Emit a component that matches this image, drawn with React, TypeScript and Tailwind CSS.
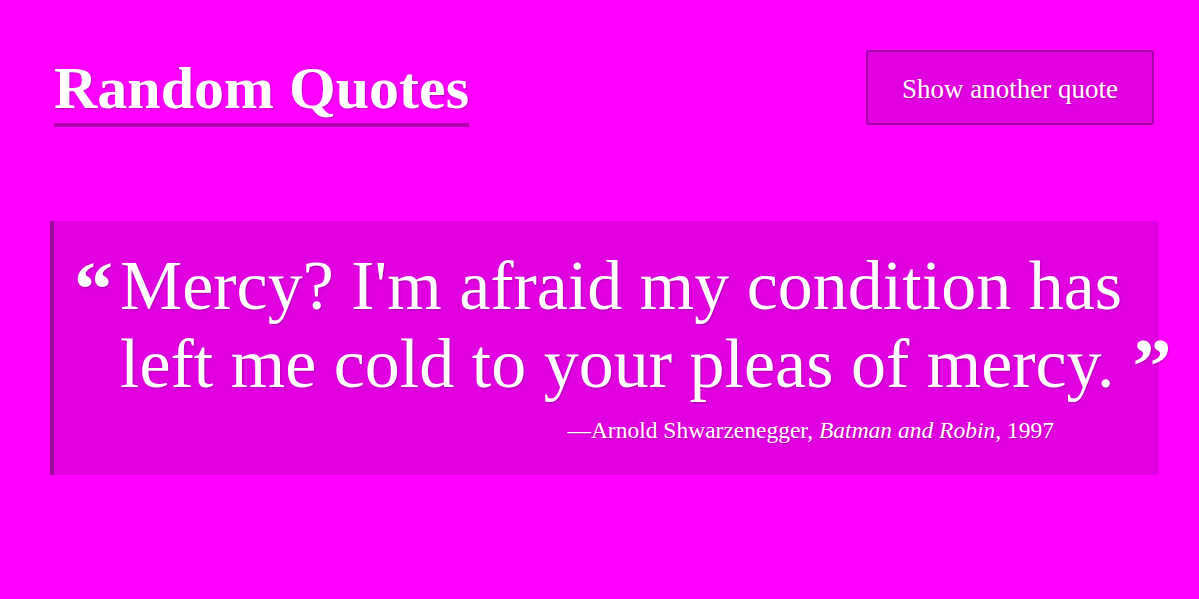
const serif = { fontFamily: '"Liberation Serif", "DejaVu Serif", serif' };

const App = () => {
  return (
    <div className="min-h-[599px] w-full bg-[#ff00ff] text-white" style={serif}>
      <header className="flex items-start justify-between pl-[54px] pr-[45px] pt-[50px]">
        <h1 className="mt-[8px] border-b-4 border-[#b000b0] pb-[5px] text-[60px] font-bold leading-[60px] [text-shadow:1px_1px_2px_rgba(90,0,90,0.35)]">
          Random Quotes
        </h1>
        <button className="h-[75px] w-[288px] rounded-[3px] border-2 border-[#a600a6] bg-[#e000e0] pt-[3px] text-[27px] text-white [text-shadow:1px_1px_1px_rgba(90,0,90,0.3)]">
          Show another quote
        </button>
      </header>

      <main className="pl-[50px] pt-[94px]">
        <blockquote className="w-[1109px] rounded-r-[4px] border-l-4 border-[#9c0a9c] bg-[#e000e0] pb-[30px] pt-[26px]">
          <div className="flex">
            <span className="w-[66px] shrink-0 pl-[20px] pt-[6px] text-[78px] font-bold leading-[72px] [text-shadow:1px_1px_2px_rgba(90,0,90,0.35)]">
              “
            </span>
            <p className="w-[1040px] text-[70px] leading-[78px] [text-shadow:1px_1px_2px_rgba(90,0,90,0.35)]">
              Mercy? I'm afraid my condition has left me cold to your pleas of mercy.
              <span className="inline-block w-0 whitespace-nowrap">
                <span className="relative top-[5px] ml-[18px] text-[78px] font-bold leading-[0]">”</span>
              </span>
            </p>
          </div>
          <p className="mt-[12px] pr-[105px] text-right text-[23.5px] leading-[30px] [text-shadow:1px_1px_1px_rgba(90,0,90,0.3)]">
            —Arnold Shwarzenegger, <cite className="italic">Batman and Robin</cite>, 1997
          </p>
        </blockquote>
      </main>
    </div>
  );
};

export default App;
